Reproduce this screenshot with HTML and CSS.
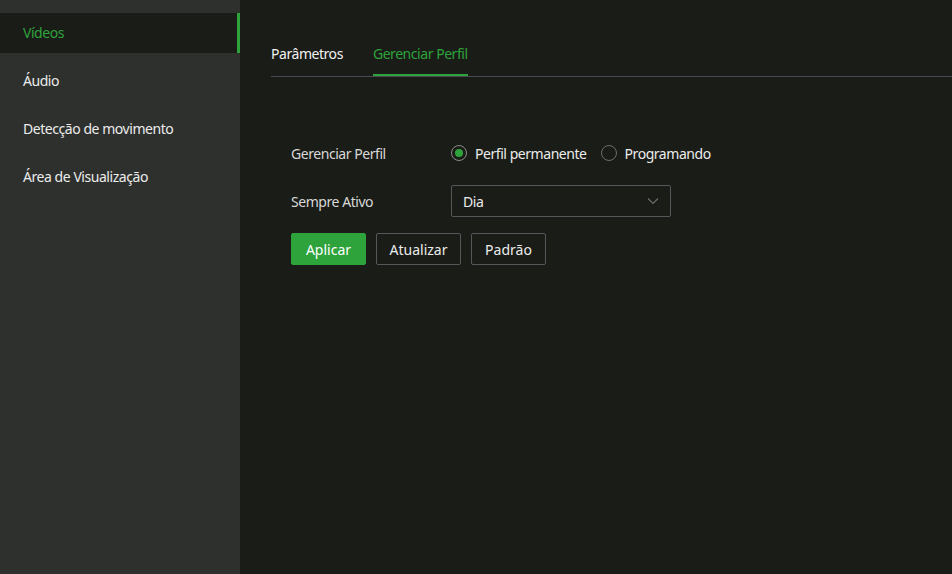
FILE: index.html
```html
<!DOCTYPE html>
<html>
<head>
<meta charset="utf-8">
<link rel="stylesheet" href="styles.css">
</head>
<body>
<div class="app">
  <nav class="sidebar">
    <div class="nav-item active">Vídeos</div>
    <div class="nav-item">Áudio</div>
    <div class="nav-item">Detecção de movimento</div>
    <div class="nav-item">Área de Visualização</div>
  </nav>
  <main class="main">
    <div class="tabs">
      <div class="tab">Parâmetros</div>
      <div class="tab active">Gerenciar Perfil</div>
    </div>
    <div class="form">
      <div class="row">
        <div class="label">Gerenciar Perfil</div>
        <div class="radios">
          <label class="radio checked"><span class="dot"></span>Perfil permanente</label>
          <label class="radio"><span class="dot"></span>Programando</label>
        </div>
      </div>
      <div class="row">
        <div class="label">Sempre Ativo</div>
        <div class="select">
          <span>Dia</span>
          <svg class="chev" width="12" height="8" viewBox="0 0 12 8"><path d="M1 1.5 L6 6.5 L11 1.5" fill="none" stroke="#6b6d68" stroke-width="1.2"/></svg>
        </div>
      </div>
      <div class="buttons">
        <button class="btn primary">Aplicar</button>
        <button class="btn wide">Atualizar</button>
        <button class="btn">Padrão</button>
      </div>
    </div>
  </main>
</div>
</body>
</html>
```
FILE: styles.css
```css
* { box-sizing: border-box; }
html, body { margin: 0; padding: 0; height: 100%; }
body {
  font-family: "Noto Sans", "Open Sans", sans-serif;
  font-size: 14px;
  color: #e8e8e8;
  background: #1a1c17;
  letter-spacing: -0.45px;
}
.app { display: flex; height: 574px; }
.sidebar {
  width: 240px;
  background: #2e302d;
  padding-top: 13px;
  display: flex;
  flex-direction: column;
  gap: 8px;
}
.nav-item {
  height: 40px;
  line-height: 40px;
  padding-left: 23px;
  color: #ececec;
}
.nav-item.active {
  background: #1a1c17;
  color: #2ea33c;
  border-right: 3px solid #2ea33c;
}
.main { flex: 1; padding-left: 31px; }
.tabs {
  margin-top: 42px;
  display: flex;
  gap: 30px;
  border-bottom: 1px solid #4a4b50;
  height: 35px;
}
.tab {
  height: 34px;
  line-height: 24px;
  color: #f2f2f2;
}
.tab.active {
  color: #2ea33c;
  border-bottom: 2px solid #2ea33c;
}
.form { padding-left: 20px; padding-top: 60px; }
.row { display: flex; align-items: center; height: 32px; margin-bottom: 16px; }
.label { width: 160px; color: #d8d8d8; }
.radios { display: flex; gap: 14px; }
.radio { display: flex; align-items: center; gap: 8px; color: #ececec; }
.dot {
  width: 16px; height: 16px; border-radius: 50%;
  border: 1px solid #6b6d68;
  position: relative;
}
.radio.checked .dot { border-color: #8a8c87; }
.radio.checked .dot::after {
  content: ""; position: absolute; left: 3px; top: 3px;
  width: 8px; height: 8px; border-radius: 50%; background: #2ea33c;
}
.select {
  width: 220px; height: 32px;
  border: 1px solid #55575a;
  border-radius: 2px;
  display: flex; align-items: center; justify-content: space-between;
  padding: 0 11px 0 11px;
  color: #ececec;
}
.buttons { display: flex; gap: 10px; margin-top: 2px; }
.btn {
  font: inherit;
  height: 32px;
  width: 75px;
  background: transparent;
  border: 1px solid #55575a;
  border-radius: 2px;
  color: #ececec;
  padding: 0;
}
.btn.wide { width: 85px; }
.btn.primary { background: #2ea33c; border-color: #2ea33c; color: #fff; }
```
